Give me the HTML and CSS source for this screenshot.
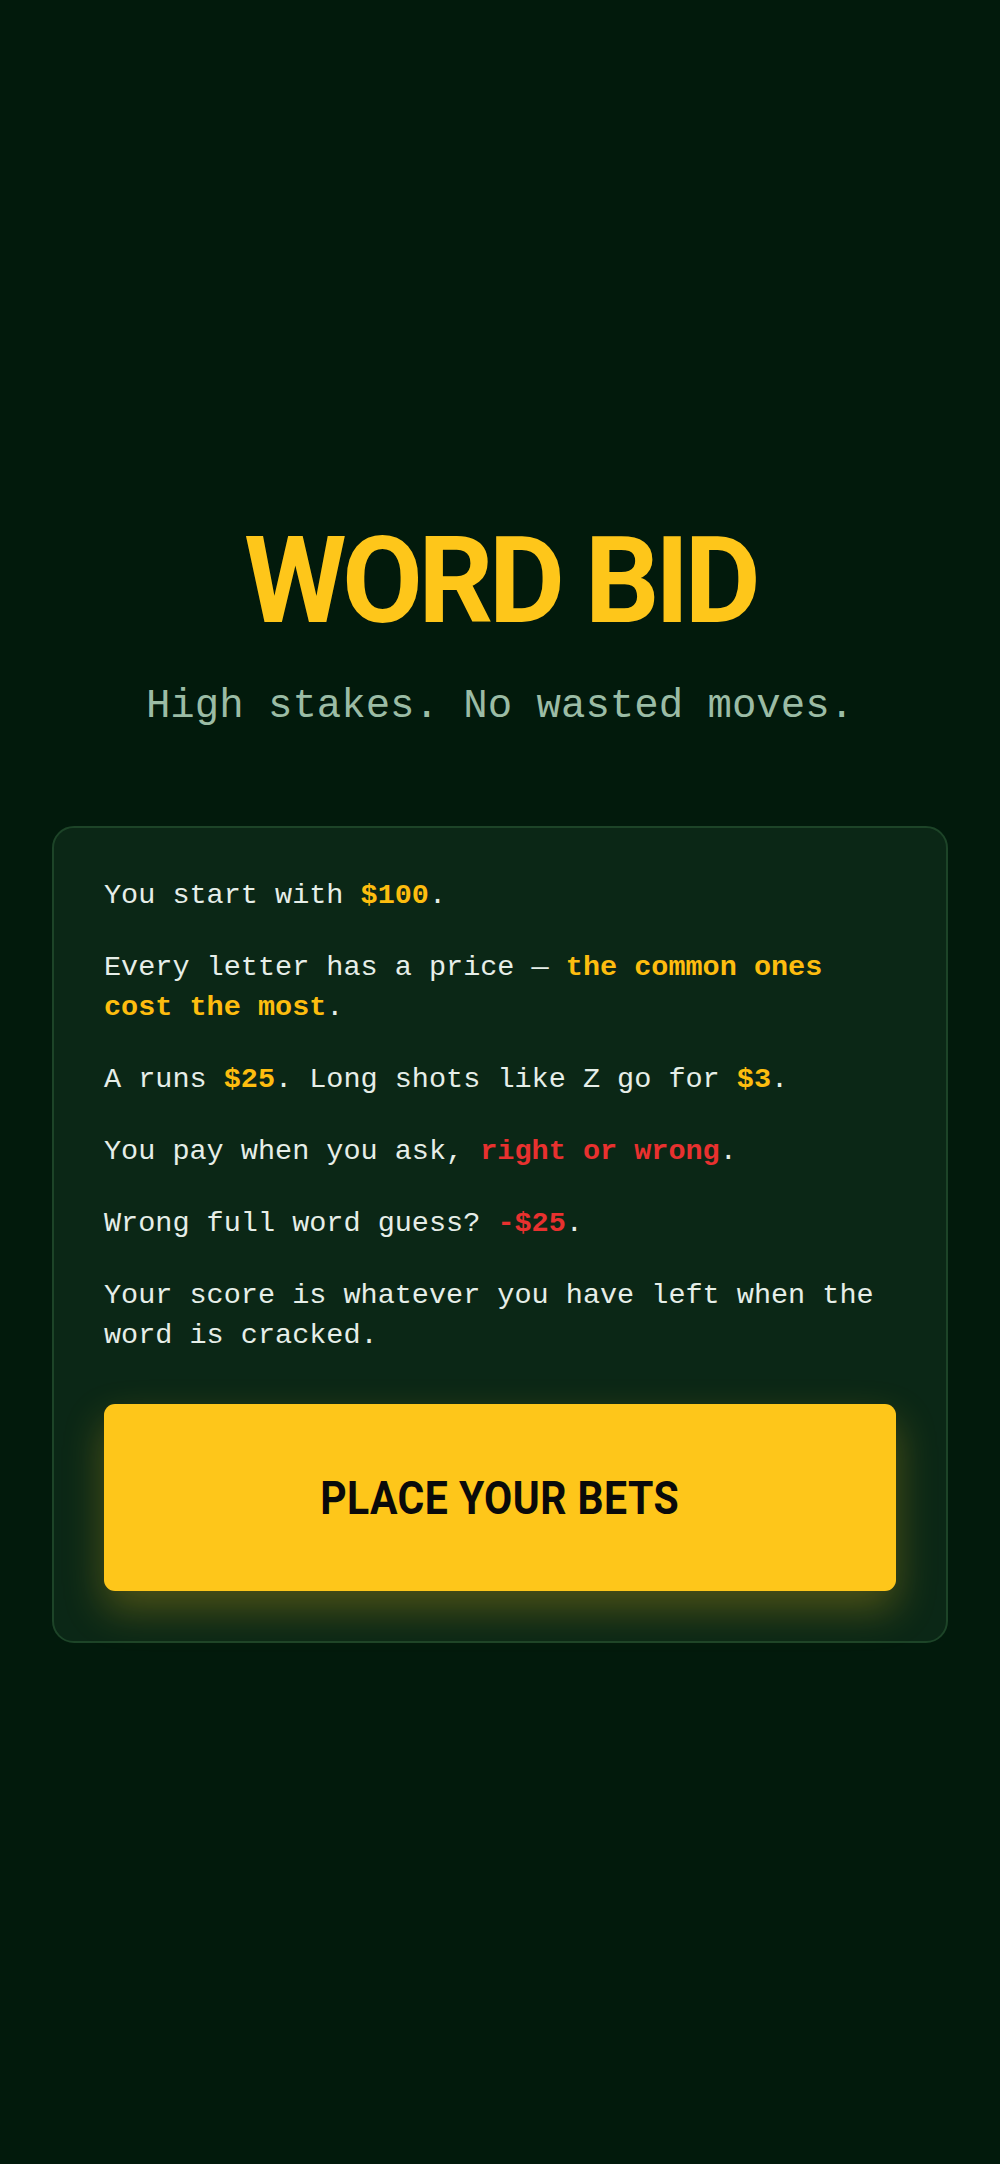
FILE: index.html
```html
<!DOCTYPE html>
<html lang="en">
<head>
<meta charset="utf-8">
<title>Word Bid</title>
<link rel="stylesheet" href="styles.css">
</head>
<body>
<main class="screen">
  <header class="hero">
    <h1 class="title"><span class="title-text">WORD BID</span></h1>
    <p class="tagline">High stakes. No wasted moves.</p>
  </header>
  <section class="card">
    <p class="rule">You start with <b class="gold">$100</b>.</p>
    <p class="rule">Every letter has a price — <b class="gold">the common ones</b> <b class="gold">cost the most</b>.</p>
    <p class="rule">A runs <b class="gold">$25</b>. Long shots like Z go for <b class="gold">$3</b>.</p>
    <p class="rule">You pay when you ask, <b class="red">right or wrong</b>.</p>
    <p class="rule">Wrong full word guess? <b class="red">-$25</b>.</p>
    <p class="rule">Your score is whatever you have left when the word is cracked.</p>
    <button class="cta" type="button"><span class="cta-text">PLACE YOUR BETS</span></button>
  </section>
</main>
</body>
</html>
```

FILE: styles.css
```css
* { box-sizing: border-box; }

html, body {
  margin: 0;
  padding: 0;
  background: #021a0c;
}

body {
  min-height: 100vh;
  font-family: "Liberation Mono", "DejaVu Sans Mono", monospace;
}

.screen {
  min-height: 100vh;
  display: flex;
  flex-direction: column;
  align-items: center;
  justify-content: center;
  padding: 0 52px 12px;
}

.hero {
  display: flex;
  flex-direction: column;
  align-items: center;
}

.title {
  margin: 0;
  font-family: Roboto, "Liberation Sans", sans-serif;
  font-weight: 700;
  font-size: 121px;
  line-height: 145px;
  color: #fec61a;
  letter-spacing: -0.04em;
}

.title-text {
  display: inline-block;
  transform: scaleX(0.97);
}

.tagline {
  margin: 28px 0 0;
  font-size: 40.7px;
  line-height: 1.2;
  color: #9bbca5;
}

.card {
  align-self: stretch;
  margin-top: 96px;
  padding: 48px 50px 50px;
  background: #0b2716;
  border: 2px solid #1d4428;
  border-radius: 22px;
  display: flex;
  flex-direction: column;
}

.rule {
  margin: 0 0 32px;
  font-size: 28.5px;
  line-height: 40px;
  color: #e6eee8;
}

.rule:last-of-type { margin-bottom: 48px; }

.gold { color: #fdbd0f; font-weight: 700; }
.red { color: #e8312f; font-weight: 700; }

.cta {
  height: 187px;
  border: 0;
  border-radius: 11px;
  background: #fec61a;
  color: #0a0a0a;
  box-shadow: 0 18px 40px rgba(254, 198, 26, 0.28);
  font-family: Roboto, "Liberation Sans", sans-serif;
  font-weight: 700;
  font-size: 46px;
  cursor: pointer;
}

.cta-text {
  display: inline-block;
  transform: scaleX(0.89);
  letter-spacing: 0.5px;
}
```
